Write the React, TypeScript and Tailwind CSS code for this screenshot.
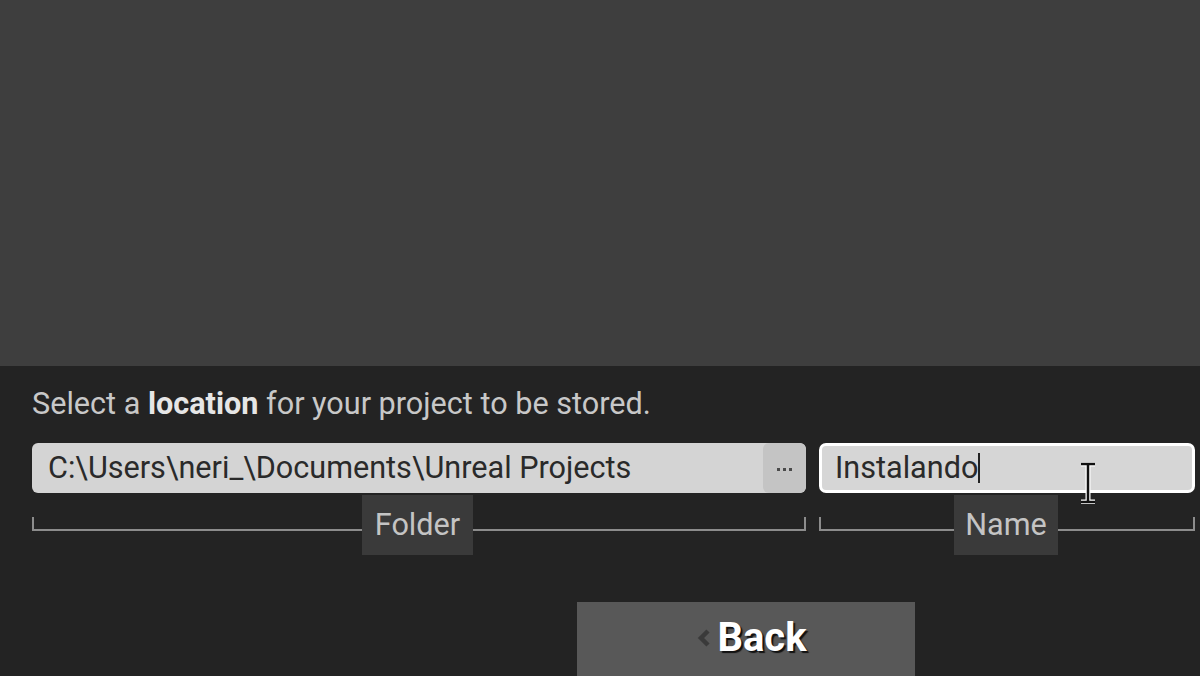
export default function App() {
  return (
    <div className="w-[1200px] h-[676px] overflow-hidden flex flex-col bg-[#232323] font-['Roboto',sans-serif]">
      <div className="h-[366px] bg-[#3e3e3e] shrink-0" />
      <div className="flex flex-col pl-[32px] pt-[20px]">
        <p className="text-[30.6px] leading-[36px] text-[#c8c8c8]">
          Select a <span className="font-bold text-[#e6e6e6]">location</span> for your project to be stored.
        </p>
        <div className="flex gap-[13px] mt-[21px]">
          <div className="w-[774px] shrink-0 flex flex-col">
            <div className="h-[50px] rounded-[6px] bg-[#d4d4d4] flex items-center overflow-hidden">
              <span className="flex-1 pl-[16px] text-[30.6px] text-[#2a2a2a] whitespace-nowrap">C:\Users\neri_\Documents\Unreal Projects</span>
              <div className="w-[43px] h-full bg-[#c4c4c4] rounded-[6px] flex items-center justify-center gap-[3px] pt-[2px]">
                <span className="w-[3px] h-[3px] bg-[#4a4a4a]" />
                <span className="w-[3px] h-[3px] bg-[#4a4a4a]" />
                <span className="w-[3px] h-[3px] bg-[#4a4a4a]" />
              </div>
            </div>
            <Bracket label="Folder" labelLeft={330} labelWidth={111} />
          </div>
          <div className="w-[376px] shrink-0 flex flex-col">
            <div className="relative h-[50px] rounded-[7px] bg-[#d6d6d6] border-[3px] border-white flex items-center">
              <span className="pl-[13px] text-[30.6px] text-[#2a2a2a]">Instalando</span>
              <span className="w-[2px] h-[30px] bg-[#222]" />
              <svg className="absolute left-[257px] top-[16px]" width="18" height="42" viewBox="0 0 18 42">
                <path d="M2 2h14M9 2v38M2 40h14" stroke="#fff" strokeWidth="5" fill="none" />
                <path d="M2 2h14M9 2v38M2 40h14" stroke="#111" strokeWidth="2.5" fill="none" />
              </svg>
            </div>
            <Bracket label="Name" labelLeft={135} labelWidth={104} />
          </div>
        </div>
        <div className="flex mt-[47px] ml-[545px]">
          <button className="w-[338px] h-[76px] bg-[#585858] flex items-center justify-center gap-[6px] pb-[4px] pl-[12px]">
            <svg width="14" height="22" viewBox="0 0 14 22">
              <path d="M11 4l-7 7 7 7" stroke="#3a3a3a" strokeWidth="4.5" fill="none" />
            </svg>
            <span className="text-[40px] font-bold text-white [text-shadow:2px_2px_1px_#111]">Back</span>
          </button>
        </div>
      </div>
    </div>
  );
}

function Bracket({ label, labelLeft, labelWidth }: { label: string; labelLeft: number; labelWidth: number }) {
  return (
    <div className="relative h-[62px]">
      <div className="absolute left-0 right-0 top-[24px] h-[14px] border-x-2 border-b-2 border-[#8c8c8c]" />
      <div
        className="absolute top-[2px] h-[60px] bg-[#3a3a3a] flex items-center justify-center text-[30.6px] text-[#c4c4c4]"
        style={{ left: labelLeft, width: labelWidth }}
      >
        {label}
      </div>
    </div>
  );
}
